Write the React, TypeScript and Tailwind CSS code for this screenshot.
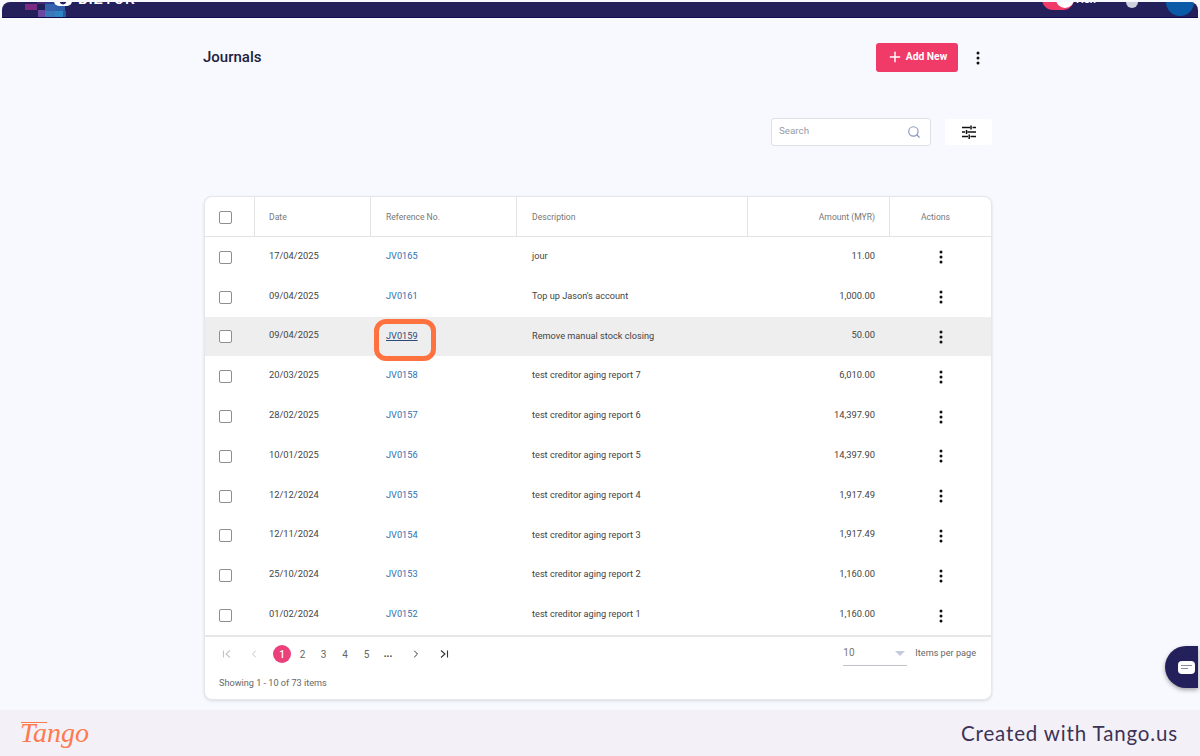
import React from "react";
import { Plus, Search, ChevronLeft, ChevronRight } from "lucide-react";

const rows = [
  ["17/04/2025", "JV0165", "jour", "11.00"],
  ["09/04/2025", "JV0161", "Top up Jason's account", "1,000.00"],
  ["09/04/2025", "JV0159", "Remove manual stock closing", "50.00"],
  ["20/03/2025", "JV0158", "test creditor aging report 7", "6,010.00"],
  ["28/02/2025", "JV0157", "test creditor aging report 6", "14,397.90"],
  ["10/01/2025", "JV0156", "test creditor aging report 5", "14,397.90"],
  ["12/12/2024", "JV0155", "test creditor aging report 4", "1,917.49"],
  ["12/11/2024", "JV0154", "test creditor aging report 3", "1,917.49"],
  ["25/10/2024", "JV0153", "test creditor aging report 2", "1,160.00"],
  ["01/02/2024", "JV0152", "test creditor aging report 1", "1,160.00"],
];

const grid = "grid grid-cols-[50px_116px_146px_231px_142px_1fr]";

function Dots() {
  return (
    <svg width="4" height="14" viewBox="0 0 4 14" className="block">
      <circle cx="2" cy="2" r="1.5" fill="#111" />
      <circle cx="2" cy="7" r="1.5" fill="#111" />
      <circle cx="2" cy="12" r="1.5" fill="#111" />
    </svg>
  );
}

function Box() {
  return <div className="w-[13px] h-[13px] rounded-[2px] border border-[#8f8f8f] bg-white" />;
}

function Tune() {
  return (
    <svg width="14" height="14" viewBox="0 0 14 14" fill="none" stroke="#111" strokeWidth="1.5">
      <path d="M0 2.5h8M10.5 2.5H14M9 0.5v4M0 7h3M5.5 7H14M4.5 5v4M0 11.5h6M8.5 11.5H14M7.2 9.5v4.5" />
    </svg>
  );
}

function Mosaic() {
  const cells = [
    [23, 3, 12, 6, "#7a2a82"],
    [35, 0, 8, 3, "#4a2a78"],
    [36, 3, 7, 6, "#1e2058"],
    [36, 9, 7, 7, "#6a4aa0"],
    [43, 0, 10, 3, "#2c3f8e"],
    [43, 3, 10, 7, "#3560ae"],
    [43, 10, 10, 6, "#3a78bc"],
    [53, 3, 10, 7, "#2e5fa8"],
    [53, 10, 8, 6, "#2e86c4"],
    [61, 10, 3, 6, "#2a5a9c"],
  ] as const;
  return (
    <svg width="72" height="16" viewBox="0 0 72 16" className="block">
      {cells.map((c, i) => (
        <rect key={i} x={c[0]} y={c[1]} width={c[2]} height={c[3]} fill={c[4]} />
      ))}
      <rect x="52" y="-6" width="18" height="11" rx="5" fill="#fff" />
      <circle cx="61" cy="0" r="3.4" fill="#23205c" />
    </svg>
  );
}

export default function App() {
  return (
    <div
      className="w-[1200px] h-[756px] overflow-hidden bg-[#f3f1f7] flex flex-col relative"
      style={{ fontFamily: "Roboto, sans-serif" }}
    >
      <div className="h-[710px] bg-[#f8f9fe] pt-[2px] pl-[2px] flex flex-col">
        <header className="h-[16px] mr-[2px] bg-[#23205c] border-b border-[#0f0c50] rounded-t-[8px] overflow-hidden flex items-end relative">
          <div className="flex items-end">
            <Mosaic />
          </div>
          <span className="text-white text-[15px] leading-none font-medium tracking-[1px] mb-[10px] ml-[4px]">BIZTOK</span>
          <div className="ml-auto flex items-end">
            <div className="w-[32px] h-[22px] rounded-full bg-[#f03a68] mb-[7px] flex items-center justify-end">
              <div className="w-[18px] h-[18px] rounded-full bg-white" />
            </div>
            <span className="text-white text-[11px] leading-none font-medium ml-[2px] mb-[12px] w-[50px]">Hen</span>
            <div className="w-[12px] h-[12px] rounded-full bg-[#cfd0de] mb-[9px]" />
            <div className="w-[28px] h-[28px] rounded-full bg-[#0b5aa8] ml-[28px] mr-[4px] mb-[1px]" />
          </div>
        </header>

        <main className="w-[788px] ml-[202px] flex-1 flex flex-col">
          <div className="flex items-center h-[30px] mt-[24px]">
            <h1 className="text-[15px] font-medium text-[#1d2140] leading-none mt-[1px] -ml-[1px]">Journals</h1>
            <button className="ml-auto w-[82px] h-[29px] rounded-[3px] bg-[#f03a68] text-white text-[10.3px] font-bold flex items-center justify-center gap-[3px]">
              <Plus size={16} strokeWidth={2.2} />
              Add New
            </button>
            <div className="ml-[18px] mr-[12px] mt-[1px]">
              <Dots />
            </div>
          </div>

          <div className="flex items-center justify-end mt-[46px]">
            <div className="w-[160px] h-[28px] mr-[14px] bg-white border border-[#dfe0e6] rounded-[3px] flex items-center px-[7px]">
              <span className="text-[9.8px] text-[#9a9ba3] flex-1 pb-[1px]">Search</span>
              <Search size={14} color="#8b98bd" strokeWidth={2} className="mr-[2px]" />
            </div>
            <div className="w-[47px] h-[26px] bg-white rounded-[2px] flex items-center justify-center">
              <Tune />
            </div>
          </div>

          <section className="mt-[50px] h-[504px] bg-white rounded-[8px] border border-[#e6e7ec] shadow-[0_1px_3px_rgba(0,0,0,0.12)] flex flex-col">
            <div className={`${grid} h-[40px] border-b border-[#e3e3e3] text-[8.6px] text-[#777] shrink-0`}>
              <div className="flex items-center pl-[14px] pt-[1px] border-r border-[#e3e3e3]"><Box /></div>
              <div className="flex items-center pl-[14px] pt-[1px] border-r border-[#e3e3e3]">Date</div>
              <div className="flex items-center pl-[15px] pt-[1px] border-r border-[#e3e3e3]">Reference No.</div>
              <div className="flex items-center pl-[15px] pt-[1px] border-r border-[#e3e3e3]">Description</div>
              <div className="flex items-center justify-end pr-[14px] pt-[1px] border-r border-[#e3e3e3]">Amount (MYR)</div>
              <div className="flex items-center justify-center pt-[1px] pr-[10px]">Actions</div>
            </div>
            <div className="h-[400px] grid grid-rows-[repeat(10,1fr)] shrink-0 border-b-2 border-[#e6e6e6]">
              {rows.map((r) => {
                const hot = r[1] === "JV0159";
                return (
                  <div key={r[1]} className={`${grid} text-[9.35px] text-[#444] ${hot ? "bg-[#eeeeee]" : ""}`}>
                    <div className="flex items-center pl-[14px] pt-[1px]"><Box /></div>
                    <div className="flex items-center pl-[14px] pb-[2px]">{r[0]}</div>
                    <div className="flex items-center pl-[15px] pb-[2px] text-[9.2px]">
                      <span className={`relative ${hot ? "text-[#2f4a78] underline" : "text-[#2f6fb0]"}`}>
                        {r[1]}
                        {hot && (
                          <span className="absolute left-[-12px] top-[-10px] w-[62px] h-[42px] rounded-[12px] border-[5px] border-[#ff7240]" />
                        )}
                      </span>
                    </div>
                    <div className="flex items-center pl-[15px] pb-[2px] text-[9.2px]">{r[2]}</div>
                    <div className="flex items-center justify-end pr-[15px] pb-[2px]">{r[3]}</div>
                    <div className="flex items-center justify-center pt-[1px]"><Dots /></div>
                  </div>
                );
              })}
            </div>
            <div className="flex-1 flex flex-col px-[14px]">
              <div className="flex items-center h-[34px]">
                <div className="flex items-center text-[10px] text-[#666]">
                  <span className="w-[16px] flex justify-center"><svg width="10" height="10" viewBox="0 0 10 10" fill="none" stroke="#c4c4c4" strokeWidth="1.1"><path d="M1.5 1.5v7M8 1.5 4 5l4 3.5" /></svg></span>
                  <span className="w-[16px] ml-[11px] flex justify-center"><ChevronLeft size={12} color="#c4c4c4" /></span>
                  <span className="w-[18px] h-[18px] ml-[11px] rounded-full bg-[#ec407a] text-white font-medium flex items-center justify-center">1</span>
                  <span className="w-[21px] ml-[1px] text-center">2</span>
                  <span className="w-[21px] text-center">3</span>
                  <span className="w-[22px] text-center">4</span>
                  <span className="w-[21px] text-center">5</span>
                  <span className="w-[22px] text-center font-bold text-[#444] leading-none">...</span>
                  <span className="w-[16px] ml-[9px] flex justify-center"><ChevronRight size={12} color="#333" /></span>
                  <span className="w-[16px] ml-[12px] flex justify-center"><svg width="10" height="10" viewBox="0 0 10 10" fill="none" stroke="#333" strokeWidth="1.1"><path d="M2 1.5 6 5l-4 3.5M8.5 1.5v7" /></svg></span>
                </div>
                <div className="ml-auto mr-[1px] flex items-start h-[28px] pt-[6px]">
                  <div className="w-[64px] h-[20px] border-b border-[#c2c2c8] flex items-start justify-between pr-[2px] text-[10px] leading-[14px] text-[#777]">
                    10
                    <span className="w-0 h-0 mt-[5px] border-x-[5px] border-x-transparent border-t-[5px] border-t-[#c3cbdc]" />
                  </div>
                  <span className="ml-[8px] text-[9.15px] leading-[14px] text-[#666]">Items per page</span>
                </div>
              </div>
              <div className="text-[9.15px] text-[#666] mt-[8px] leading-none">Showing 1 - 10 of 73 items</div>
            </div>
          </section>
        </main>
      </div>

      <footer className="flex-1 flex items-center justify-between pl-[20px] pr-[22px] relative">
        <span className="relative text-[28px] leading-none italic text-[#ff7a4d]" style={{ fontFamily: "'Liberation Serif', serif" }}>
          Tango
          <span className="absolute left-[1px] top-[3px] w-[26px] h-px bg-[#ff7a4d]" />
        </span>
        <span className="text-[20.5px] text-[#3d3356] tracking-[0.85px]" style={{ fontFamily: "Lato, sans-serif" }}>Created with Tango.us</span>
      </footer>

      <div className="absolute left-[1165px] top-[646px] w-[33px] h-[42px] rounded-l-[21px] bg-[#23205c] shadow-[0_2px_4px_rgba(0,0,0,0.35)] flex items-center justify-end pr-[3px]">
        <div className="w-[17px] h-[13px] rounded-[4px] bg-white flex flex-col justify-center gap-[2px] px-[3px]">
          <div className="h-px bg-[#8a8aa8]" />
          <div className="h-px w-[7px] bg-[#8a8aa8]" />
        </div>
      </div>
    </div>
  );
}
